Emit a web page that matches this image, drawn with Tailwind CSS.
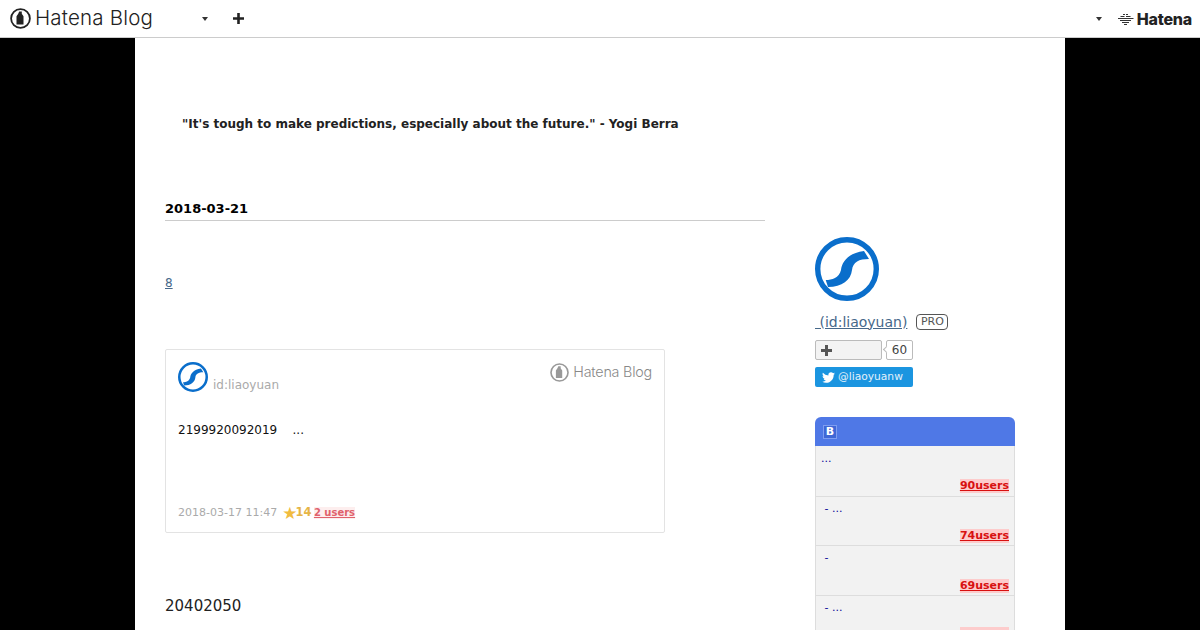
<!DOCTYPE html>
<html lang="en">
<head>
    <meta charset="UTF-8">
    <title>Hatena Blog</title>
    <script src="https://cdn.jsdelivr.net/npm/@tailwindcss/browser@4"></script>
</head>
<body class="bg-black h-[630px] overflow-hidden font-['DejaVu_Sans',sans-serif]">
    <!-- Top bar -->
    <header class="h-[38px] bg-white border-b border-[#ccc] flex items-center pl-[10px] pr-[8px]">
        <svg class="w-[21px] h-[21px]" viewBox="0 0 21 21">
            <circle cx="10.5" cy="10.5" r="9.4" fill="none" stroke="#222" stroke-width="1.8"/>
            <path d="M9.2 3.500h2.600v2.200l1.700 2.600v8.200h-7V8.300l1.700-2.600z" fill="#222"/>
        </svg>
        <span class="ml-[4px] text-[20.500px] leading-none font-['Inter',sans-serif] font-light text-[#222] w-[120px] whitespace-nowrap tracking-[0.2px]">Hatena Blog</span>
        <span class="ml-[47px] w-0 h-0 border-x-[3px] border-x-transparent border-t-[4px] border-t-[#333]"></span>
        <span class="ml-[25px]">
            <svg class="w-[11px] h-[11px]" viewBox="0 0 11 11"><path d="M4.200 0h2.600v4.200H11v2.600H6.800V11H4.200V6.800H0V4.200h4.200z" fill="#222"/></svg>
        </span>
        <span class="ml-auto w-0 h-0 border-x-[3px] border-x-transparent border-t-[4px] border-t-[#333]"></span>
        <svg class="ml-[15px] w-[17px] h-[12px]" viewBox="0 0 17 12" fill="none" stroke="#333" stroke-width="1">
            <path d="M6 1.500h2M9 1.500h2M3.500 3.500h4M9 3.500h4.500M1 5.500h15.500M3 7.500h11M5 9.500h7M7 11.500h3"/>
        </svg>
        <span class="ml-[3px] text-[16px] leading-none font-['Inter',sans-serif] font-extrabold text-[#222] tracking-[-0.2px]">Hatena</span>
    </header>

    <!-- Page -->
    <div class="w-[930px] h-[592px] mx-auto bg-white overflow-hidden">
        <p class="pt-[78px] pl-[47px] text-[12px] leading-[16px] font-bold text-[#222]">"It's tough to make predictions, especially about the future." - Yogi Berra</p>

        <div class="flex pl-[30px] mt-[69px] gap-[50px]">
            <!-- Entry -->
            <main class="w-[600px] shrink-0">
                <h2 class="text-[13px] leading-[16px] font-bold text-black pb-[3px] border-b border-[#ccc]">2018-03-21</h2>
                <p class="mt-[54px] text-[12px] leading-[16px] text-[#46688a] underline">8</p>

                <div class="mt-[58px] w-[500px] h-[184px] border border-[#e3e3e3] rounded-[2px] px-[12px] pt-[12px] relative">
                    <div class="flex justify-between">
                        <div class="flex items-end">
                            <svg class="w-[30px] h-[30px]" viewBox="0 0 64 64">
                                <circle cx="32" cy="32" r="29.300" fill="none" stroke="#0a6ecb" stroke-width="5.400"/>
                                <path d="M10.700 43C17 43 24 41 26 33C27 25 33 16 49 14L54 22C44 22 38 25 37 33C36 43 27 50 13 50Z" fill="#0a6ecb"/>
                            </svg>
                            <span class="ml-[5px] text-[12px] leading-[14px] text-[#aaa]">id:liaoyuan</span>
                        </div>
                        <div class="flex items-center h-[20px]">
                            <svg class="w-[19px] h-[19px]" viewBox="0 0 21 21">
                                <circle cx="10.500" cy="10.500" r="9.400" fill="none" stroke="#999" stroke-width="1.800"/>
                                <path d="M9.200 3.500h2.600v2.200l1.700 2.600v8.200h-7V8.300l1.700-2.600z" fill="#999"/>
                            </svg>
                            <span class="ml-[4px] text-[14.300px] leading-none font-['Inter',sans-serif] text-[#888] font-light whitespace-nowrap tracking-[-0.2px]">Hatena Blog</span>
                        </div>
                    </div>
                    <p class="mt-[30px] text-[12px] leading-[16px] text-[#111] whitespace-pre">2199920092019    ...</p>
                    <div class="absolute left-[12px] bottom-[11px] flex items-center h-[16px]">
                        <span class="text-[11px] text-[#aaa]">2018-03-17 11:47</span>
                        <span class="ml-[5px] text-[#f1bc3f] text-[17px] leading-none -mr-[2px]">★</span>
                        <span class="text-[11.500px] font-bold text-[#e6b445]">14</span>
                        <span class="ml-[2.500px] text-[10px] leading-[12px] font-bold text-[#e0616b] underline bg-[#fdeeee]">2 users</span>
                    </div>
                </div>

                <p class="mt-[63px] text-[15px] leading-[20px] text-[#222]">20402050</p>
            </main>

            <!-- Sidebar -->
            <aside class="w-[200px] shrink-0 pt-[36px]">
                <svg class="w-[64px] h-[64px]" viewBox="0 0 64 64">
                    <circle cx="32" cy="32" r="29.300" fill="none" stroke="#0a6ecb" stroke-width="5.400"/>
                    <path d="M10.700 43C17 43 24 41 26 33C27 25 33 16 49 14L54 22C44 22 38 25 37 33C36 43 27 50 13 50Z" fill="#0a6ecb"/>
                </svg>
                <div class="mt-[11px] flex items-center h-[19px]">
                    <span class="text-[14px] leading-[18px] text-[#46688a] underline whitespace-pre"> (id:liaoyuan)</span>
                    <span class="ml-[9px] border border-[#555] rounded-[4px] px-[3.500px] text-[11px] leading-[14px] text-[#555] font-medium">PRO</span>
                </div>
                <div class="mt-[9px] flex items-center">
                    <div class="w-[67px] h-[20px] bg-[#f3f3f3] border border-[#bbb] rounded-[2px] flex items-center pl-[5px]">
                        <svg class="w-[11px] h-[11px]" viewBox="0 0 11 11"><path d="M4 0h3v4h4v3H7v4H4V7H0V4h4z" fill="#555"/></svg>
                    </div>
                    <div class="relative ml-[4px] w-[27px] h-[20px] border border-[#bbb] rounded-[2px] text-[12px] leading-[18px] text-center text-[#444]">
                        60
                        <span class="absolute -left-[3px] top-[6px] w-[5px] h-[5px] bg-white border-l border-b border-[#bbb] rotate-45"></span>
                    </div>
                </div>
                <div class="mt-[7px] w-[98px] h-[20px] bg-[#1b95e0] rounded-[2px] flex items-center pl-[7px] text-white">
                    <svg class="w-[13px] h-[13px]" viewBox="0 0 24 24" fill="currentColor"><path d="M23.950 4.570a10 10 0 0 1-2.820.770 4.960 4.960 0 0 0 2.160-2.720 9.900 9.900 0 0 1-3.120 1.180 4.920 4.920 0 0 0-8.380 4.480A13.960 13.960 0 0 1 1.640 3.160a4.820 4.820 0 0 0-.67 2.480 4.920 4.920 0 0 0 2.190 4.100 4.900 4.900 0 0 1-2.230-.620v.060a4.920 4.920 0 0 0 3.950 4.830 5 5 0 0 1-2.210.080 4.940 4.940 0 0 0 4.600 3.420A9.870 9.870 0 0 1 0 19.540a14 14 0 0 0 7.560 2.210c9.050 0 14-7.500 14-13.980 0-.21 0-.42-.02-.63a9.940 9.940 0 0 0 2.460-2.550z"/></svg>
                    <span class="ml-[3px] text-[10.700px] leading-none text-[#e3f1fb]">@liaoyuanw</span>
                </div>

                <!-- Bookmark ranking -->
                <div class="mt-[30px] w-[200px] rounded-t-[6px] overflow-hidden">
                    <div class="h-[29px] bg-[#4f78e6] flex items-center pl-[8px]">
                        <span class="w-[14px] h-[14px] bg-[#3f67d6] border border-[#7f9df0] text-white text-[11px] leading-[12px] font-bold text-center">B</span>
                    </div>
                    <ul class="bg-[#f2f2f2] border-x border-[#ddd]">
                        <li class="h-[51px] border-b border-[#ddd] px-[5px] pt-[5px] flex flex-col">
                            <a class="text-[11px] leading-[16px] text-[#0b0b99] whitespace-pre">...</a>
                            <span class="mt-auto mb-[3px] self-end text-[11px] leading-[14px] font-bold text-[#d81010] underline bg-[#fdcccc]">90users</span>
                        </li>
                        <li class="h-[49px] border-b border-[#ddd] px-[5px] pt-[4px] flex flex-col">
                            <a class="text-[11px] leading-[16px] text-[#0b0b99] whitespace-pre"> - ...</a>
                            <span class="mt-auto mb-[2px] self-end text-[11px] leading-[14px] font-bold text-[#d81010] underline bg-[#fdcccc]">74users</span>
                        </li>
                        <li class="h-[50px] border-b border-[#ddd] px-[5px] pt-[4px] flex flex-col">
                            <a class="text-[11px] leading-[16px] text-[#0b0b99] whitespace-pre"> -</a>
                            <span class="mt-auto mb-[2px] self-end text-[11px] leading-[14px] font-bold text-[#d81010] underline bg-[#fdcccc]">69users</span>
                        </li>
                        <li class="h-[50px] px-[5px] pt-[4px] flex flex-col">
                            <a class="text-[11px] leading-[16px] text-[#0b0b99] whitespace-pre"> - ...</a>
                            <span class="mt-[11px] self-end w-[49px] h-[14px] bg-[#fdcccc]"></span>
                        </li>
                    </ul>
                </div>
            </aside>
        </div>
    </div>
</body>
</html>
